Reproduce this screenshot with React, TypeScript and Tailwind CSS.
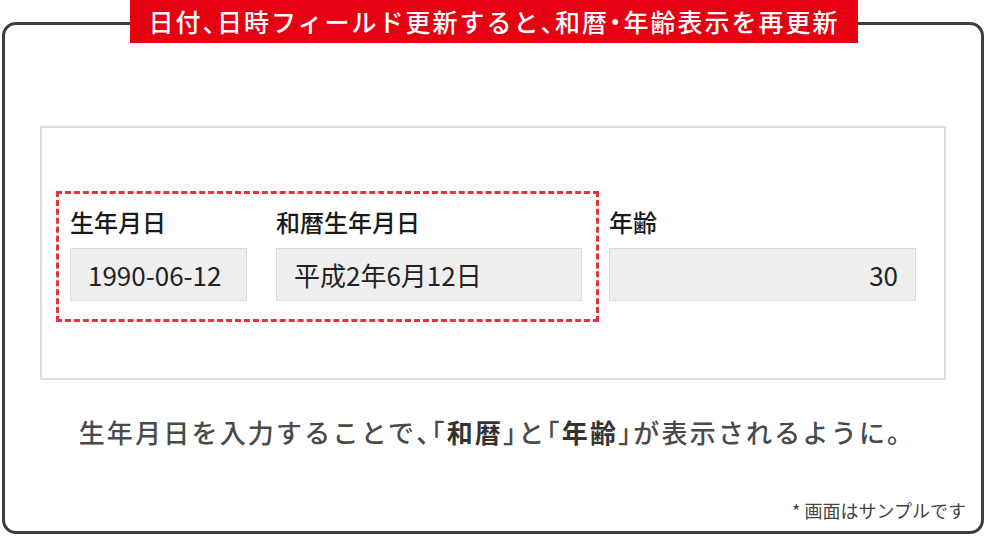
import React from 'react';

const font = { fontFamily: '"Noto Sans CJK JP", "Noto Sans", sans-serif' };

function Field({ label, value, width, right }: { label: string; value: string; width: string; right?: boolean }) {
  return (
    <div className={`flex flex-col ${width}`}>
      <div className="text-[24px] leading-[28px] font-medium text-[#1a1a1a] h-[28px] mb-[12px]">{label}</div>
      <div
        className={`h-[53px] border border-[#dcdcdc] bg-[#efefef] flex items-center px-[17px] text-[26px] text-[#222] ${
          right ? 'justify-end' : ''
        }`}
      >
        {value}
      </div>
    </div>
  );
}

// half-width punctuation
function P({ children }: { children: React.ReactNode }) {
  return <span className="[font-feature-settings:'halt']">{children}</span>;
}

export default function App() {
  return (
    <div className="w-[986px] h-[536px] bg-white relative overflow-hidden" style={font}>
      <div className="absolute left-[2px] top-[22px] w-[982px] h-[512px] border-[3px] border-[#3d3d3d] rounded-[14px]" />
      <div className="absolute left-[130px] top-0 w-[728px] h-[43px] bg-[#e60012] text-white text-[25px] font-medium flex items-center justify-center tracking-[2px] whitespace-nowrap">
        日付<P>、</P>日時フィールド更新すると<P>、</P>和暦<P>・</P>年齢表示を再更新
      </div>

      <div className="relative pt-[126px] px-[40px] flex flex-col items-center">
        <div className="w-[906px] h-[254px] border-2 border-[#dddddd] pl-[14px] pt-[63px] flex items-start">
          <div className="flex border-[3px] border-dashed border-[#e2333f] pl-[11px] pr-[14px] pt-[14px] pb-[18px] gap-[29px]">
            <Field label="生年月日" value="1990-06-12" width="w-[177px]" />
            <Field label="和暦生年月日" value="平成2年6月12日" width="w-[306px]" />
          </div>
          <div className="ml-[10px] pt-[17px]">
            <Field label="年齢" value="30" width="w-[307px]" right />
          </div>
        </div>

        <div className="mt-[35px] ml-[8px] text-[26px] leading-[34px] tracking-[2.2px] text-[#4a4a4a] font-medium whitespace-nowrap">
          生年月日を入力することで<P>、「</P>
          <span className="font-bold text-[#333]">和暦</span>
          <P>」</P>と<P>「</P>
          <span className="font-bold text-[#333]">年齢</span>
          <P>」</P>が表示されるように。
        </div>
      </div>

      <div className="absolute right-[20px] top-[497px] text-[18px] leading-[26px] text-[#444] font-normal">* 画面はサンプルです</div>
    </div>
  );
}
